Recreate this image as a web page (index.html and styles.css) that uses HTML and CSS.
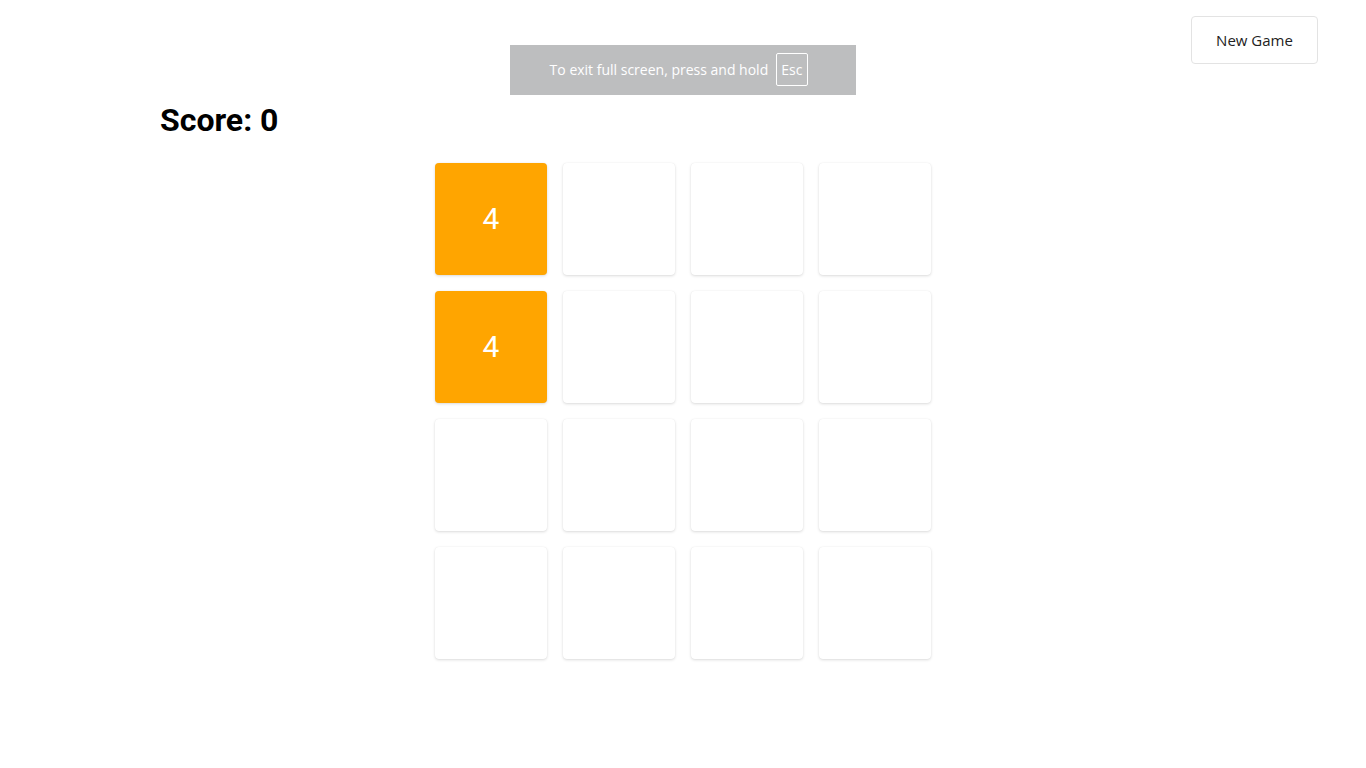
FILE: index.html
```html
<!DOCTYPE html>
<html>
<head>
<meta charset="utf-8">
<link rel="stylesheet" href="styles.css">
</head>
<body>
<header class="topbar">
  <button class="new-game">New Game</button>
</header>
<div class="fs-toast">
  <span>To exit full screen, press and hold</span>
  <span class="key">Esc</span>
</div>
<main class="game">
  <h2 class="score">Score: 0</h2>
  <div class="board">
    <div class="tile tile-4">4</div>
    <div class="tile"></div>
    <div class="tile"></div>
    <div class="tile"></div>
    <div class="tile tile-4">4</div>
    <div class="tile"></div>
    <div class="tile"></div>
    <div class="tile"></div>
    <div class="tile"></div>
    <div class="tile"></div>
    <div class="tile"></div>
    <div class="tile"></div>
    <div class="tile"></div>
    <div class="tile"></div>
    <div class="tile"></div>
    <div class="tile"></div>
  </div>
</main>
</body>
</html>
```
FILE: styles.css
```css
html, body {
  margin: 0;
  padding: 0;
  background: #ffffff;
  font-family: Roboto, "Liberation Sans", sans-serif;
}

.topbar {
  display: flex;
  justify-content: flex-end;
  padding: 16px 48px 0 0;
}

.new-game {
  width: 127px;
  height: 48px;
  background: #ffffff;
  border: 1px solid #e3e3e3;
  border-radius: 4px;
  font-family: "Open Sans", sans-serif;
  font-size: 15px;
  font-weight: 500;
  color: #222222;
  cursor: pointer;
}

.fs-toast {
  position: absolute;
  top: 45px;
  left: 510px;
  width: 346px;
  height: 50px;
  padding: 0 8px 2px 0;
  background: #bdbebf;
  color: #ffffff;
  font-family: "Open Sans", sans-serif;
  font-size: 14px;
  display: flex;
  align-items: center;
  justify-content: center;
  gap: 8px;
  box-sizing: border-box;
}

.fs-toast .key {
  border: 1px solid #ffffff;
  border-radius: 2px;
  padding: 6px 5px 6px 4px;
  line-height: 19px;
}

.game {
  padding: 0 0 40px;
}

.score {
  margin: 37px 0 0 160px;
  font-size: 32px;
  font-weight: 700;
  line-height: 38px;
  color: #000000;
}

.board {
  margin: 24px auto 0;
  width: 496px;
  display: grid;
  grid-template-columns: repeat(4, 112px);
  grid-auto-rows: 112px;
  gap: 16px;
}

.tile {
  background: #ffffff;
  border-radius: 4px;
  box-shadow: 0 1px 3px rgba(0, 0, 0, 0.14), 0 0 1px rgba(0, 0, 0, 0.08);
  display: flex;
  align-items: center;
  justify-content: center;
  padding-bottom: 2px;
  box-sizing: border-box;
  color: #ffffff;
  font-size: 30px;
}

.tile-4 {
  background: #ffa500;
}
```
